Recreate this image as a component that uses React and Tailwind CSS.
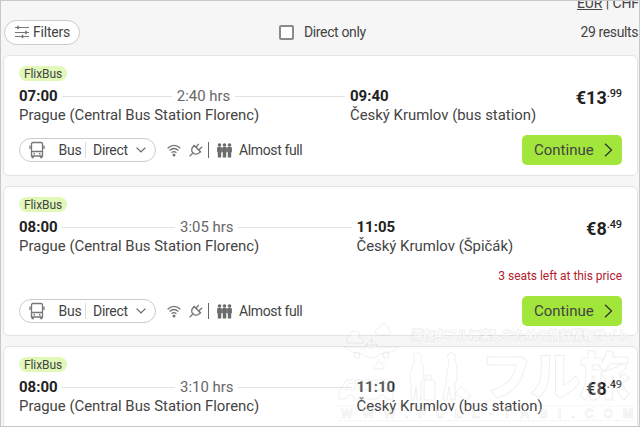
const trips = [
  {
    id: 1,
    departure: "07:00",
    duration: "2:40 hrs",
    arrival: "09:40",
    to: "Český Krumlov (bus station)",
    euros: "€13",
    cents: ".99",
    legWidth: "w-[331px]",
    cardHeight: "h-[121px]",
  },
  {
    id: 2,
    departure: "08:00",
    duration: "3:05 hrs",
    arrival: "11:05",
    to: "Český Krumlov (Špičák)",
    euros: "€8",
    cents: ".49",
    notice: "3 seats left at this price",
    legWidth: "w-[337.5px]",
    cardHeight: "h-[150px]",
  },
  {
    id: 3,
    departure: "08:00",
    duration: "3:10 hrs",
    arrival: "11:10",
    to: "Český Krumlov (bus station)",
    euros: "€8",
    cents: ".49",
    legWidth: "w-[337.5px]",
    cardHeight: "h-[121px]",
  },
];

function FiltersIcon() {
  return (
    <svg width="14" height="14" viewBox="0 0 14 14" fill="none" stroke="#777" strokeWidth="1">
      <path d="M0 2.5h14M0 7.5h14M0 11.5h14" />
      <path d="M3 .8v3.4M11 5.8v3.4M7.5 9.8v3.4" strokeWidth="1.6" />
    </svg>
  );
}

function BusIcon() {
  return (
    <svg width="16" height="18" viewBox="0 0 16 18" fill="none" stroke="#777" strokeWidth="1.3">
      <path d="M2.5 15V3Q2.5 1.5 4 1.5h8Q13.5 1.5 13.5 3v12z" />
      <path d="M2.5 10.5h11M1 4.5V8M15 4.5V8" />
      <path d="M4.5 12.8H6M10 12.8h1.5" strokeWidth="1.6" />
      <path d="M3.7 15v2.2M12.3 15v2.2" strokeWidth="2.2" />
    </svg>
  );
}

function WifiIcon() {
  return (
    <svg width="14" height="13" viewBox="0 0 14 13" fill="none" stroke="#777" strokeWidth="1.3">
      <path d="M.6 4.3Q7-1.5 13.4 4.3M2.6 6.6Q7 2.5 11.4 6.6M4.6 8.7Q7 6.6 9.4 8.7" />
      <circle cx="7" cy="11" r="1.5" fill="#777" stroke="none" />
    </svg>
  );
}

function PlugIcon() {
  return (
    <svg width="14" height="14" viewBox="0 0 14 14" fill="none" stroke="#777" strokeWidth="1.3">
      <path d="M5.3 2.6l6 6Q8.8 12.2 5.2 10.8L3 8.7Q1.8 5 5.3 2.6z" />
      <path d="M4.6 1.9l7.5 7.5M7.2 4L9.8.8M10 6.7l3.2-2.9M3.8 10L.6 13.4" />
    </svg>
  );
}

function PeopleIcon() {
  return (
    <svg width="15" height="15" viewBox="0 0 15 15" fill="#6b6b6b">
      {[0, 5, 10].map((x) => (
        <g key={x} transform={`translate(${x} 0)`}>
          <circle cx="2.5" cy="2" r="1.8" />
          <path d="M.1 5Q.1 4 1.1 4h2.8q1 0 1 1v4.2H4.2v5.3H.8V9.2H.1z" />
        </g>
      ))}
    </svg>
  );
}

function Price({ euros, cents }) {
  return (
    <div className="flex items-start text-[#222]">
      <span className="text-[18px] font-bold leading-[22px]">{euros}</span>
      <span className="text-[11px] font-medium leading-[14px] tracking-[-0.1px]">{cents}</span>
    </div>
  );
}

function TripCard({ trip }) {
  return (
    <article
      className={`shrink-0 rounded-md border border-[#e4e4e4] bg-white pl-[15px] pr-[15px] pt-[10px] ${trip.cardHeight}`}
    >
      <div className="flex h-[15px] w-[48px] items-center justify-center rounded-full bg-[#e1f8b9] text-[12px] tracking-[-0.1px] text-[#444]">
        FlixBus
      </div>

      <div className="mt-[5px] flex h-[42px]">
        <div className={`shrink-0 ${trip.legWidth}`}>
          <div className="flex h-5 items-center">
            <span className="w-[38px] text-[15px] font-bold text-[#222]">{trip.departure}</span>
            <span className="ml-[5px] h-px flex-1 bg-[#e1e1e1]" />
            <span className="mx-[5px] text-[14.9px] text-[#666]">{trip.duration}</span>
            <span className="mr-[5px] h-px flex-1 bg-[#e1e1e1]" />
          </div>
          <div className="text-[14.9px] leading-[19px]">Prague (Central Bus Station Florenc)</div>
        </div>
        <div className="flex-1 whitespace-nowrap">
          <div className="text-[15px] font-bold leading-5 text-[#222]">{trip.arrival}</div>
          <div className="text-[14.9px] leading-[19px]">{trip.to}</div>
        </div>
        <div className="pt-[1px]">
          <Price euros={trip.euros} cents={trip.cents} />
        </div>
      </div>

      {trip.notice && (
        <div className="mt-[7px] h-[23px] text-right text-[12px] leading-5 tracking-[-0.04px] text-[#b3202c]">
          {trip.notice}
        </div>
      )}

      <div className="mt-[7px] flex h-[30px] items-center">
        <button className="flex h-6 w-[137px] items-center rounded-full border border-[#ccc] pl-[9px] text-[14px] tracking-[-0.3px]">
          <BusIcon />
          <span className="ml-[10px] w-[30px] text-center">Bus</span>
          <span className="h-4 w-px bg-[#ddd]" />
          <span className="ml-[7px] w-[43px] text-left">Direct</span>
          <svg width="10" height="6" viewBox="0 0 10 6" fill="none" stroke="#666" strokeWidth="1.2">
            <path d="M.6.6L5 5 9.4.6" />
          </svg>
        </button>
        <div className="ml-[11px] flex items-center">
          <WifiIcon />
          <span className="ml-[8px]">
            <PlugIcon />
          </span>
          <span className="ml-[5px] h-4 w-px bg-[#666]" />
          <span className="ml-[8px]">
            <PeopleIcon />
          </span>
          <span className="ml-[7px] text-[14px] tracking-[-0.37px]">Almost full</span>
        </div>
        <button className="ml-auto flex h-[30px] w-[100px] items-center rounded-[5px] bg-[#a2e63b] pl-[12px] text-[15px]">
          <span className="w-[70px] text-left">Continue</span>
          <svg width="9" height="14" viewBox="0 0 9 14" fill="none" stroke="#333" strokeWidth="1.3">
            <path d="M1 .8L7.5 7 1 13.2" />
          </svg>
        </button>
      </div>
    </article>
  );
}

function Watermark() {
  return (
    <div className="pointer-events-none absolute left-[337px] top-[317px]">
      <svg
        width="302"
        height="109"
        viewBox="0 0 302 109"
        fill="#fff"
        fillOpacity=".25"
        stroke="#888"
        strokeOpacity=".14"
        strokeWidth=".9"
      >
        <path d="M10 25Q6 19 12 18Q12 12 18 13Q23 14 21 19Q26 20 25 25z" />
        <path d="M39 17Q35 12 41 10Q43 4 48 7Q51 9 50 12Q55 14 51 17z" />
        <path d="M36 51Q34 48 38 47Q39 42 43 45Q48 47 45 51z" />
        <path d="M6 29L28 30Q29 23 33.5 22.5Q38 23 39 30L61 29Q55 35 42 36Q39 40 33.5 40Q28 40 25 36Q12 35 6 29z" />
        <circle cx="19" cy="37" r="3" />
        <circle cx="48" cy="37" r="3" />
        <path d="M27 27h13M33.5 20v7M30 30h7" />
        <path d="M1 81V74L8 62H50Q55 62 55 66V81H48A4 4 0 0 0 40 81H16A4 4 0 0 0 8 81zM7 72H16L18 65H11zM21 65h12v7H21zM37 65h13v7H37z" />
        <path d="M77 42a4 4 0 1 1 5 0l3 5 1 13-3 4v18h-4l-1-13-2 13h-3V65l-1-10z" />
        <path d="M86 62h9q2 0 2 2v16q0 2-2 2h-9zM88 62v-5h5v5" />
        <path d="M111 42a4 4 0 1 1 5 0l3 5v16l-2 2v17h-4l-2-13-2 13h-4l3-18z" />
        <path d="M117 76l6-8 10 10-5 4z" />
        <path d="M0 88h298M0 102.5h298" strokeDasharray="1 1" />
        <g fontFamily="Noto Sans CJK JP, sans-serif" fontWeight="900">
          <text x="143" y="77" fontSize="51" textLength="149">フル旅</text>
        </g>
        <g fontFamily="Noto Sans CJK JP, sans-serif" fontWeight="700" strokeWidth="1.4" fillOpacity=".8">
          <text x="73" y="22" fontSize="12" textLength="218" paintOrder="stroke">
            滞在中フルに楽しむための旅行情報サイト
          </text>
        </g>
        <g fontFamily="Liberation Sans, sans-serif" fontWeight="700" fillOpacity=".4">
          <text x="3" y="100" fontSize="12" textLength="292">WWW.FULL-TABI.COM</text>
        </g>
      </svg>
    </div>
  );
}

export default function App() {
  return (
    <div className="relative h-[427px] w-[640px] overflow-hidden border border-[#c8c8c8] bg-[#f6f6f6] font-['Roboto',sans-serif] text-[#444]">
      <header className="flex h-[54px] flex-col">
        <div className="flex h-[19px] justify-end text-[14px] leading-[19px]">
          <div className="-mt-[7px] whitespace-pre tracking-[-0.1px]">
            <span className="underline underline-offset-1">EUR</span> | CHF
          </div>
        </div>
        <div className="flex h-6 items-center pl-[3px] pr-[1px] text-[14px]">
          <button className="flex h-[25px] w-[76px] shrink-0 items-center gap-[4px] rounded-full border border-[#ccc] bg-white pl-[10px] tracking-[-0.2px]">
            <FiltersIcon />
            Filters
          </button>
          <label className="ml-[199px] flex items-center tracking-[-0.37px]">
            <span className="mr-[10px] h-[15px] w-[15px] rounded-[2px] border-2 border-[#8a8a8a] bg-white" />
            Direct only
          </label>
          <span className="ml-auto tracking-[-0.4px]">29 results</span>
        </div>
      </header>

      <main className="flex flex-col gap-[10px] pl-[2px] pr-[1px]">
        {trips.map((trip) => (
          <TripCard key={trip.id} trip={trip} />
        ))}
      </main>

      <Watermark />
    </div>
  );
}
